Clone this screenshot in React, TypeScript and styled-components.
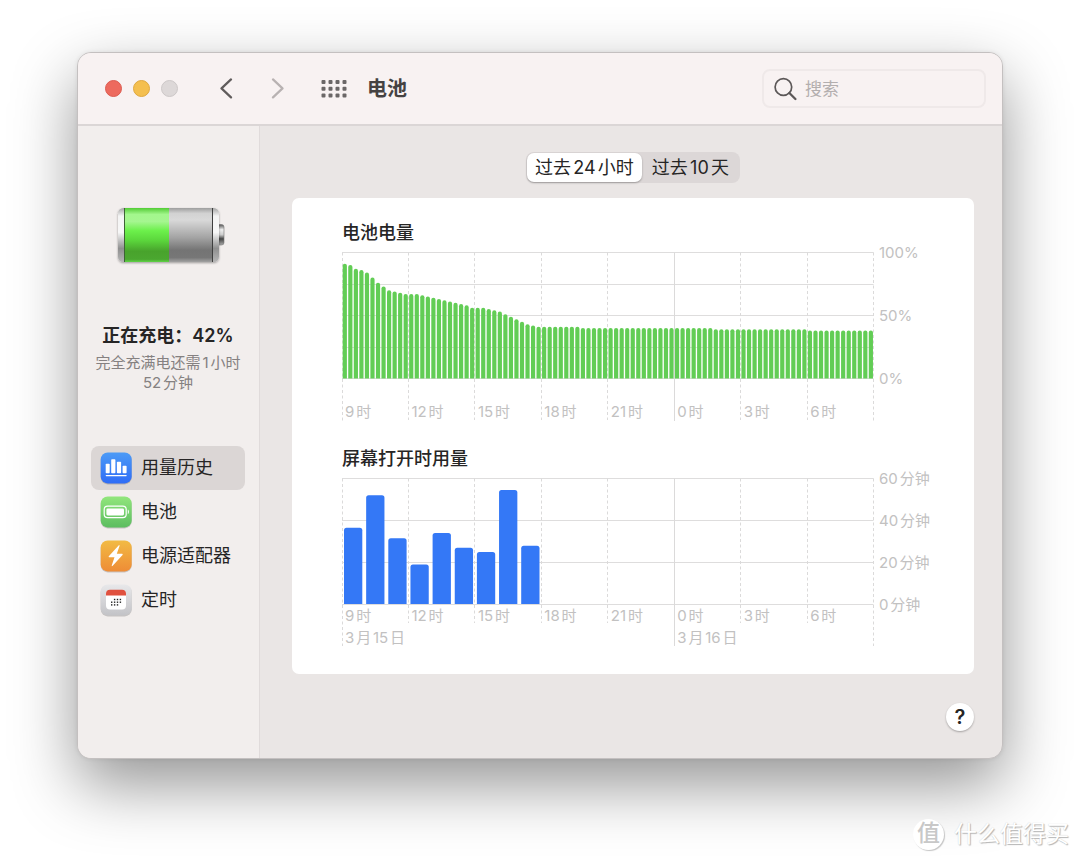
import React from "react";
import styled, { createGlobalStyle } from "styled-components";

const GlobalStyle = createGlobalStyle`
  *, *::before, *::after { box-sizing: border-box; }
  body {
    margin: 0;
    background: #fff;
    color: #262525;
    font-family: Inter, "Noto Sans CJK SC", sans-serif;
    text-autospace: normal;
  }
  button, input { font: inherit; color: inherit; text-autospace: inherit; }
`;

const Page = styled.div`
  display: flex;
  flex-direction: column;
  min-height: 100vh;
  padding: 52px 11px 10px;
  overflow: hidden;
`;

const Window = styled.div`
  margin: 0 66px;
  border: 1px solid #c4c0c0;
  border-radius: 14px;
  background: #eae6e5;
  box-shadow: 0 26px 64px rgba(0, 0, 0, 0.42), 0 0 4px rgba(0, 0, 0, 0.08);
`;

const TitleBar = styled.header`
  display: flex;
  align-items: center;
  height: 73px;
  padding: 0 16px 0 27px;
  border-bottom: 2px solid #dbd6d6;
  border-radius: 13px 13px 0 0;
  background: #f8f2f2;
`;

const Lights = styled.div`
  display: flex;
  gap: 11px;
`;

const Light = styled.button<{ $fill: string; $edge: string }>`
  width: 17px;
  height: 17px;
  padding: 0;
  border: 1px solid ${(p) => p.$edge};
  border-radius: 50%;
  background: ${(p) => p.$fill};
`;

const Nav = styled.nav`
  display: flex;
  align-items: center;
  gap: 28px;
  margin-left: 36px;
`;

const IconButton = styled.button<{ $tone: string }>`
  display: flex;
  justify-content: center;
  width: 24px;
  padding: 0;
  border: 0;
  background: none;
  color: ${(p) => p.$tone};
`;

const GridButton = styled(IconButton)`
  width: 28px;
  margin-left: 2px;
`;

const WindowTitle = styled.h1`
  flex: 1;
  margin: 0 0 0 19px;
  font-size: 20px;
  line-height: 28px;
  font-weight: 700;
  color: #454242;
`;

const Search = styled.label`
  display: flex;
  align-items: center;
  gap: 8px;
  width: 224px;
  height: 39px;
  padding: 0 9px;
  border: 2px solid #efe9e9;
  border-radius: 8px;
  color: #5c5858;
`;

const SearchInput = styled.input`
  flex: 1;
  min-width: 0;
  padding: 0;
  border: 0;
  outline: 0;
  background: none;
  font-size: 17px;
  line-height: 24px;
  &::placeholder { color: #b3aeae; opacity: 1; }
`;

const Body = styled.div`
  display: flex;
`;

const Sidebar = styled.aside`
  display: flex;
  flex-direction: column;
  align-items: center;
  flex: 0 0 182px;
  padding: 80px 14px 0 13px;
  border-right: 1px solid #e0dbdb;
  border-radius: 0 0 0 13px;
  background: #f2eeed;
`;

const ChargeState = styled.p`
  margin: 54px 0 0;
  font-size: 18px;
  line-height: 24px;
  font-weight: 600;
  white-space: nowrap;
`;

const ChargeNote = styled.p`
  margin: 5px 0 53px;
  font-size: 15px;
  line-height: 20px;
  text-align: center;
  color: #858181;
`;

const Menu = styled.ul`
  align-self: stretch;
  margin: 0;
  padding: 0;
  list-style: none;
`;

const MenuButton = styled.button<{ $active?: boolean }>`
  display: flex;
  align-items: center;
  gap: 9px;
  width: 100%;
  height: 44px;
  padding: 0 9px;
  border: 0;
  border-radius: 8px;
  background: ${(p) => (p.$active ? "#dbd6d5" : "none")};
  font-size: 18px;
  line-height: 24px;
  white-space: nowrap;
`;

const Main = styled.main`
  display: flex;
  flex-direction: column;
  flex: 1;
  min-width: 0;
  padding: 26px 28px 27px 32px;
`;

const Segments = styled.div`
  display: flex;
  align-self: center;
  height: 31px;
  padding: 1px;
  border-radius: 8px;
  background: #dcd7d7;
`;

const Segment = styled.button<{ $active?: boolean }>`
  padding: 0 ${(p) => (p.$active ? 8 : 10)}px;
  border: 0;
  border-radius: 7px;
  background: ${(p) => (p.$active ? "#fff" : "none")};
  box-shadow: ${(p) => (p.$active ? "0 1px 2px rgba(0, 0, 0, 0.3)" : "none")};
  font-size: 18px;
  line-height: 24px;
`;

const Card = styled.section`
  display: flex;
  flex-direction: column;
  gap: 21px;
  margin-top: 15px;
  padding: 23px 32px 22px 50px;
  border-radius: 7px;
  background: #fff;
`;

const ChartTitle = styled.h2`
  margin: 0;
  font-size: 18px;
  line-height: 24px;
  font-weight: 500;
`;

const Plot = styled.svg`
  display: block;
  width: 100%;
  overflow: visible;
  font-size: 15px;
  text { fill: #c2c1c1; }
`;

const HelpButton = styled.button`
  align-self: flex-end;
  width: 28px;
  height: 28px;
  margin-top: 29px;
  padding: 0;
  border: 0;
  border-radius: 50%;
  background: #fff;
  box-shadow: 0 1px 2px rgba(0, 0, 0, 0.3);
  font-size: 20px;
  line-height: 28px;
  font-weight: 600;
`;

const Watermark = styled.footer`
  display: flex;
  align-items: center;
  justify-content: flex-end;
  gap: 10px;
  margin-top: auto;
  color: #fff;
  font-size: 23px;
  line-height: 34px;
  text-shadow: 1px 1px 1px #b4b4b4, 0 0 1px #ccc;
`;

const Seal = styled.span`
  width: 31px;
  height: 31px;
  border-radius: 50%;
  background: #fff;
  box-shadow: 1px 1px 1px #c4c4c4;
  color: #c8c8c8;
  font-size: 23px;
  font-weight: 500;
  line-height: 29px;
  text-align: center;
  text-shadow: none;
`;

const repeat = (value: number, count: number): number[] => Array(count).fill(value);

const LEVELS = [
  91, 90, 87, 86, 84, 80, 76, 73, 70, 69, 68, 67, 67, 67, 66, 65, 64, 63, 62, 61, 60, 59, 58,
  56, 56, 56, 55, 54, 53, 51, 49, 47, 45, 43, 42,
  ...repeat(41, 8), ...repeat(40, 24), ...repeat(39, 17), ...repeat(38, 12),
];
const MINUTES = [36.5, 52, 31.5, 19, 34, 27, 25, 54.5, 28];
const HOURS = ["9时", "12时", "15时", "18时", "21时", "0时", "3时", "6时"];
const PLOT_WIDTH = 531.6;
const COLUMN = PLOT_WIDTH / 8;
const TOP = 7.5;
const PLOT_HEIGHT = 126;
const BASE = TOP + PLOT_HEIGHT;

function HorizontalLines({ parts }: { parts: number }) {
  return (
    <g stroke="#dedddd">
      {Array.from({ length: parts + 1 }, (_, i) => {
        const y = Math.floor(TOP + (PLOT_HEIGHT * i) / parts) + 0.5;
        return <line key={i} x1={0} x2={PLOT_WIDTH} y1={y} y2={y} />;
      })}
    </g>
  );
}

function VerticalLines({ end, outerEnd }: { end: number; outerEnd: number }) {
  return (
    <g stroke="#dbdada">
      {Array.from({ length: 9 }, (_, i) => {
        const x = Math.floor(i * COLUMN) + 0.5;
        const midnight = i === 5;
        const long = midnight || i === 0 || i === 8;
        return (
          <line
            key={i}
            x1={x}
            x2={x}
            y1={TOP}
            y2={long ? outerEnd : end}
            strokeDasharray={midnight ? undefined : "3 2.5"}
          />
        );
      })}
    </g>
  );
}

function HourLabels({ y }: { y: number }) {
  return (
    <>
      {HOURS.map((hour, i) => (
        <text key={hour} x={i * COLUMN + 3} y={y}>{hour}</text>
      ))}
    </>
  );
}

function BatteryChart() {
  const step = PLOT_WIDTH / LEVELS.length;
  return (
    <Plot viewBox="0 0 600 181" role="img" aria-label="电池电量">
      <HorizontalLines parts={4} />
      <VerticalLines end={175} outerEnd={176} />
      {LEVELS.map((level, i) => {
        const h = (level / 100) * PLOT_HEIGHT;
        const x = i * step + 0.7;
        return (
          <path
            key={i}
            fill="#62cd55"
            d={`M${x} ${BASE}v${-(h - 2)}a2.1 2.1 0 0 1 4.2 0v${h - 2}z`}
          />
        );
      })}
      <HourLabels y={172} />
      <text x={537} y={13}>100%</text>
      <text x={537} y={76}>50%</text>
      <text x={537} y={139}>0%</text>
    </Plot>
  );
}

function ScreenChart() {
  return (
    <Plot viewBox="0 0 600 181" role="img" aria-label="屏幕打开时用量">
      <HorizontalLines parts={3} />
      <VerticalLines end={152} outerEnd={175} />
      {MINUTES.map((m, i) => {
        const h = (m / 60) * PLOT_HEIGHT;
        const x = (i * COLUMN) / 3 + 2;
        return (
          <path
            key={i}
            fill="#3478f6"
            d={`M${x} ${BASE - 0.5}v${-(h - 3)}q0 -2.5 2.5 -2.5h13.3q2.5 0 2.5 2.5v${h - 3}z`}
          />
        );
      })}
      <HourLabels y={150} />
      <text x={3} y={172}>3月15日</text>
      <text x={COLUMN * 5 + 3} y={172}>3月16日</text>
      <text x={537} y={13}>60分钟</text>
      <text x={537} y={55}>40分钟</text>
      <text x={537} y={97}>20分钟</text>
      <text x={537} y={139}>0分钟</text>
    </Plot>
  );
}

function BatteryPicture() {
  return (
    <svg width="118" height="64" viewBox="-6 0 118 64" aria-hidden="true">
      <defs>
        <linearGradient id="shell" x1="0" y1="0" x2="0" y2="1">
          <stop offset="0" stopColor="#a5a5a5" />
          <stop offset=".15" stopColor="#f4f4f4" />
          <stop offset=".45" stopColor="#f7f7f7" />
          <stop offset=".75" stopColor="#8f8f8f" />
          <stop offset="1" stopColor="#b5b5b5" />
        </linearGradient>
        <linearGradient id="charge" x1="0" y1="0" x2="0" y2="1">
          <stop offset="0" stopColor="#52cc35" />
          <stop offset=".12" stopColor="#a3f78d" />
          <stop offset=".25" stopColor="#a5f690" />
          <stop offset=".42" stopColor="#6cf04b" />
          <stop offset=".6" stopColor="#5bd63c" />
          <stop offset=".8" stopColor="#48a32c" />
          <stop offset=".95" stopColor="#4ba730" />
          <stop offset="1" stopColor="#61d547" />
        </linearGradient>
        <linearGradient id="empty" x1="0" y1="0" x2="0" y2="1">
          <stop offset="0" stopColor="#9e9e9e" />
          <stop offset=".1" stopColor="#d2d2d2" />
          <stop offset=".22" stopColor="#d9d9d9" />
          <stop offset=".55" stopColor="#a3a3a3" />
          <stop offset=".78" stopColor="#747474" />
          <stop offset=".92" stopColor="#777" />
          <stop offset="1" stopColor="#a2a2a2" />
        </linearGradient>
        <linearGradient id="cap" x1="0" y1="0" x2="0" y2="1">
          <stop offset="0" stopColor="#555" />
          <stop offset=".25" stopColor="#eee" />
          <stop offset=".5" stopColor="#ccc" />
          <stop offset=".7" stopColor="#444" />
          <stop offset="1" stopColor="#aaa" />
        </linearGradient>
        <filter id="soft" x="-10%" y="-10%" width="120%" height="130%">
          <feDropShadow dx="0" dy="1" stdDeviation="1" floodOpacity=".35" />
        </filter>
      </defs>
      <rect x="102" y="18.5" width="7" height="20.5" rx="2.5" fill="url(#cap)" stroke="#777" strokeWidth=".6" />
      <rect x="3" y="2" width="101" height="54" rx="5.5" fill="url(#shell)" filter="url(#soft)" />
      <rect x="9" y="2" width="46" height="54" fill="url(#charge)" />
      <rect x="54" y="2" width="44" height="54" fill="url(#empty)" />
      <path d="M9.5 2v54" stroke="#3d6335" />
      <path d="M97.5 2v54" stroke="#3e3e3e" />
    </svg>
  );
}

function Tile({ id, from, to, children }: { id: string; from: string; to: string; children: React.ReactNode }) {
  return (
    <svg width="32" height="34" viewBox="0 0 32 34" aria-hidden="true">
      <defs>
        <linearGradient id={id} x1="0" y1="0" x2="0" y2="1">
          <stop offset="0" stopColor={from} />
          <stop offset="1" stopColor={to} />
        </linearGradient>
      </defs>
      <rect x=".7" y="2.4" width="31" height="31" rx="7" fill="#000" opacity=".18" />
      <rect x=".7" y="1.4" width="31" height="31" rx="7" fill={`url(#${id})`} />
      {children}
    </svg>
  );
}

const HistoryIcon = () => (
  <Tile id="tile-history" from="#4c9bf6" to="#2f6cf6">
    <g fill="#fff">
      <rect x="5.7" y="12.8" width="4" height="9.5" rx=".8" />
      <rect x="11.2" y="8.3" width="4.2" height="14" rx=".8" />
      <rect x="16.9" y="10.8" width="4.2" height="11.5" rx=".8" />
      <rect x="22.6" y="14.8" width="4" height="7.5" rx=".8" />
      <rect x="5.7" y="24" width="21" height="1.2" rx=".6" />
    </g>
  </Tile>
);

const BatteryIcon = () => (
  <Tile id="tile-battery" from="#92e67c" to="#5cbd60">
    <rect x="4.2" y="11.2" width="22" height="11.4" rx="3.4" fill="none" stroke="#fff" strokeWidth="1.2" />
    <rect x="6.4" y="13.4" width="17.6" height="7" rx="1.4" fill="#fff" />
    <path d="M27.8 14.6c1.5.6 1.5 4 0 4.6z" fill="#fff" />
  </Tile>
);

const AdapterIcon = () => (
  <Tile id="tile-adapter" from="#f2bb44" to="#ee8c36">
    <path
      d="M18.6 6.4 8.8 17.2q-.7 1 .5 1.1h5.2l-2.7 7.9q-.3 1.5.9.6l9.8-10.9q.7-1-.5-1.1h-5.2l2.7-7.8q.2-1.5-.9-.6z"
      fill="#fff"
    />
  </Tile>
);

const ScheduleIcon = () => (
  <Tile id="tile-schedule" from="#e8e8ea" to="#c3c3c7">
    <rect x="6" y="7" width="20" height="19.5" rx="4" fill="#fff" />
    <path d="M6 12.6V10.8a4 4 0 0 1 4-4h12a4 4 0 0 1 4 4v1.8z" fill="#e0513f" />
    <g fill="#222">
      {[0, 1, 2].map((row) =>
        [0, 1, 2, 3].map((col) =>
          (row === 0 && col === 0) || (row === 2 && col === 3) ? null : (
            <rect key={`${row}-${col}`} x={11 + col * 2.9} y={15.8 + row * 2.7} width="1.4" height="1.4" />
          )
        )
      )}
    </g>
  </Tile>
);

const MENU = [
  { label: "用量历史", Icon: HistoryIcon, active: true },
  { label: "电池", Icon: BatteryIcon },
  { label: "电源适配器", Icon: AdapterIcon },
  { label: "定时", Icon: ScheduleIcon },
];

export default function App() {
  return (
    <Page>
      <GlobalStyle />
      <Window>
        <TitleBar>
          <Lights>
            <Light $fill="#ed6a5e" $edge="#dc5c51" aria-label="关闭" />
            <Light $fill="#f4bf4f" $edge="#dfa840" aria-label="最小化" />
            <Light $fill="#ddd8d8" $edge="#cdc8c8" aria-label="缩放" />
          </Lights>
          <Nav>
            <IconButton $tone="#605c5c" aria-label="后退">
              <svg width="14" height="22" viewBox="0 0 14 22" fill="none" stroke="currentColor" strokeWidth="2.2" strokeLinecap="round" strokeLinejoin="round">
                <path d="M12 1.4 2.5 10.4l9.5 9" />
              </svg>
            </IconButton>
            <IconButton $tone="#b8b2b2" aria-label="前进">
              <svg width="14" height="22" viewBox="0 0 14 22" fill="none" stroke="currentColor" strokeWidth="2.2" strokeLinecap="round" strokeLinejoin="round">
                <path d="M2 1.4 11.5 10.4 2 19.4" />
              </svg>
            </IconButton>
            <GridButton $tone="#6b6767" aria-label="显示全部">
              <svg width="26" height="18" viewBox="0 0 26 18" fill="currentColor">
                {[0, 1, 2].map((row) =>
                  [0, 1, 2, 3].map((col) => (
                    <rect key={`${row}-${col}`} x={0.5 + col * 7} y={row * 6.8} width="4" height="4" rx="1" />
                  ))
                )}
              </svg>
            </GridButton>
          </Nav>
          <WindowTitle>电池</WindowTitle>
          <Search>
            <svg width="24" height="24" viewBox="0 0 24 24" fill="none" stroke="currentColor" strokeLinecap="round" aria-hidden="true">
              <circle cx="10.4" cy="10" r="8.3" strokeWidth="1.7" />
              <path d="m16.4 16 6 6" strokeWidth="2.3" />
            </svg>
            <SearchInput type="text" placeholder="搜索" aria-label="搜索" />
          </Search>
        </TitleBar>
        <Body>
          <Sidebar>
            <BatteryPicture />
            <ChargeState>正在充电：42%</ChargeState>
            <ChargeNote>完全充满电还需1小时<br />52分钟</ChargeNote>
            <Menu>
              {MENU.map(({ label, Icon, active }) => (
                <li key={label}>
                  <MenuButton $active={active}>
                    <Icon />
                    {label}
                  </MenuButton>
                </li>
              ))}
            </Menu>
          </Sidebar>
          <Main>
            <Segments>
              <Segment $active>过去24小时</Segment>
              <Segment>过去10天</Segment>
            </Segments>
            <Card>
              <div>
                <ChartTitle>电池电量</ChartTitle>
                <BatteryChart />
              </div>
              <div>
                <ChartTitle>屏幕打开时用量</ChartTitle>
                <ScreenChart />
              </div>
            </Card>
            <HelpButton aria-label="帮助">?</HelpButton>
          </Main>
        </Body>
      </Window>
      <Watermark>
        <Seal>值</Seal>
        <span>什么值得买</span>
      </Watermark>
    </Page>
  );
}
